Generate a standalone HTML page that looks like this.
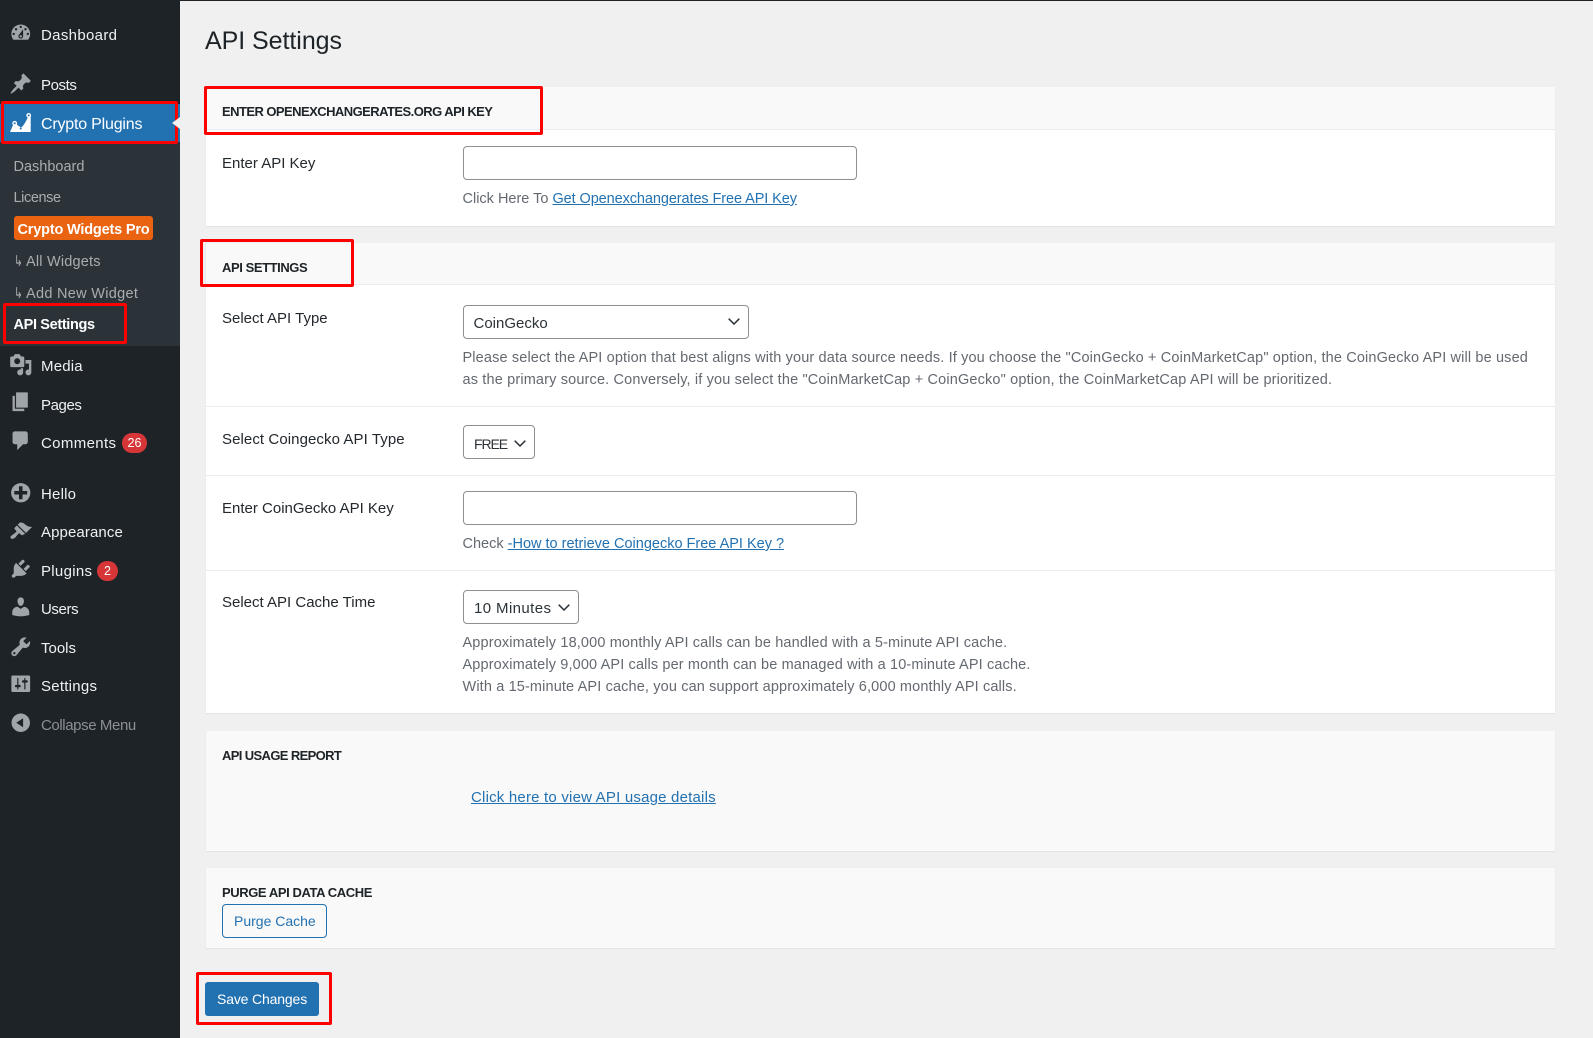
<!DOCTYPE html>
<html lang="en">
<head>
<meta charset="utf-8">
<title>API Settings</title>
<style>
html,body{margin:0;padding:0;width:1593px;height:1038px;overflow:hidden;background:#f0f0f0;font-family:"Liberation Sans",sans-serif}
*{box-sizing:border-box}
.t{position:absolute;white-space:nowrap;line-height:20px;height:20px}
.m{color:#f0f0f1;font-size:15px;left:41px}
.s{color:#a9adb1;font-size:14.5px;left:13.5px}
svg.i{position:absolute;width:23.5px;height:23.5px;left:8.75px;fill:#a0a5aa}
.bg{position:absolute}
.card{position:absolute;left:206px;width:1349px;background:#fff;box-shadow:0 1px 1px #e2e2e2,0 0 1px #e8e8e8}
.sep{position:absolute;left:206px;width:1349px;height:1px;background:#ececec}
.head{position:absolute;left:206px;width:1349px;background:#f9f9f9}
.h{color:#1d2327;font-size:13px;left:222px;font-weight:bold}
.l{color:#23282d;font-size:15px;left:222px}
.d{color:#646970;font-size:14.5px;left:462.5px}
a{color:#2271b1;text-decoration:underline}
.inp{position:absolute;left:463px;width:394px;height:34px;background:#fff;border:1px solid #8c8f94;border-radius:4px}
.sel{position:absolute;left:463px;height:34px;background:#fff;border:1px solid #8c8f94;border-radius:4px}
.chev{position:absolute;width:12px;height:7px;fill:none;stroke:#2c3338;stroke-width:1.5}
.red{position:absolute;border:3.5px solid #fd0000;border-radius:2px}
.badge{position:absolute;background:#d63638;color:#fff;border-radius:10px;height:20px;line-height:20px;font-size:12.5px;text-align:center}
.ar{position:absolute;left:14px;color:#a9adb1;font-size:15px;line-height:20px;height:20px;transform:scaleX(.7);transform-origin:left center}
</style>
</head>
<body>
<div class="bg" style="left:0;top:0;width:1593px;height:1px;background:#1d2327"></div>
<div class="bg" style="left:0;top:0;width:180px;height:1038px;background:#1d2327"></div>
<div class="bg" style="left:0;top:104px;width:180px;height:38px;background:#2271b1"></div>
<div class="bg" style="left:0;top:142px;width:180px;height:204px;background:#2c3338"></div>

<svg class="i" viewBox="0 0 20 20" style="top:20.5px"><path fill-rule="evenodd" d="M3.76 16h12.48c1.1-1.37 1.76-3.11 1.76-5 0-4.42-3.58-8-8-8s-8 3.58-8 8c0 1.89.66 3.63 1.76 5zM10 4c.55 0 1 .45 1 1s-.45 1-1 1-1-.45-1-1 .45-1 1-1zM6 6c.55 0 1 .45 1 1s-.45 1-1 1-1-.45-1-1 .45-1 1-1zm8 0c.55 0 1 .45 1 1s-.45 1-1 1-1-.45-1-1 .45-1 1-1zm-5.37 5.55L12 7v6c0 1.1-.9 2-2 2s-2-.9-2-2c0-.57.24-1.08.63-1.45zM4 10c.55 0 1 .45 1 1s-.45 1-1 1-1-.45-1-1 .45-1 1-1zm12 0c.55 0 1 .45 1 1s-.45 1-1 1-1-.45-1-1 .45-1 1-1zm-5 3c0-.55-.45-1-1-1s-1 .45-1 1 .45 1 1 1 1-.45 1-1z"/></svg>
<div class="t m" style="top:26px;letter-spacing:.33px">Dashboard</div>
<svg class="i" viewBox="0 0 20 20" style="top:71.5px"><path d="M10.44 3.02l1.82-1.82 6.36 6.35-1.83 1.82c-1.05-.68-2.48-.57-3.41.36l-.75.75c-.92.93-1.04 2.35-.35 3.41l-1.83 1.82-2.41-2.41-2.8 2.79c-.42.42-3.38 2.71-3.8 2.29s1.86-3.39 2.28-3.81l2.79-2.79L4.1 9.36l1.83-1.82c1.05.69 2.48.57 3.41-.36l.75-.75c.93-.92 1.05-2.35.35-3.41z"/></svg>
<div class="t m" style="top:76px;letter-spacing:-.4px">Posts</div>
<svg style="position:absolute;left:10px;top:113px;width:21px;height:20px" viewBox="0 0 21 20"><path fill="#fff" d="M0 19 3.5 11 5 10 8 12.5 11 14.5Q14 13 18.7 2.5L20.7 2V19Z"/><circle cx="4.7" cy="10.3" r="2.4" fill="#fff"/><circle cx="18.7" cy="2.4" r="2.4" fill="#fff"/><circle cx="4.7" cy="10.3" r="1" fill="#2271b1"/><circle cx="18.7" cy="2.4" r="1" fill="#2271b1"/><circle cx="10.7" cy="15.5" r="1" fill="#2271b1"/></svg>
<div class="t" style="top:115px;left:41px;color:#fff;font-size:16px;letter-spacing:-.2px">Crypto Plugins</div>

<div class="t s" style="top:157px">Dashboard</div>
<div class="t s" style="top:188px;letter-spacing:-.4px">License</div>
<div class="bg" style="left:14px;top:216px;width:139px;height:24px;background:#e96311;border-radius:3px"></div>
<div class="t" style="top:220px;left:17.5px;color:#fff;font-size:14.5px;font-weight:bold;letter-spacing:-.18px">Crypto Widgets Pro</div>
<div class="ar" style="top:252px">↳</div><div class="t s" style="top:252px;left:26px;letter-spacing:.2px">All Widgets</div>
<div class="ar" style="top:284px">↳</div><div class="t s" style="top:284px;left:26px;letter-spacing:.3px">Add New Widget</div>
<div class="t" style="top:315px;left:13.5px;color:#fff;font-size:14.5px;font-weight:bold;letter-spacing:-.35px">API Settings</div>

<svg class="i" viewBox="0 0 20 20" style="top:352.75px"><path d="M13 11V4c0-.55-.45-1-1-1h-1.67L9 1H5L3.67 3H2c-.55 0-1 .45-1 1v7c0 .55.45 1 1 1h10c.55 0 1-.45 1-1zM7 4.5c1.38 0 2.5 1.12 2.5 2.5S8.38 9.5 7 9.5 4.5 8.38 4.5 7 5.62 4.5 7 4.5zM14 6h5v10.5c0 1.38-1.12 2.5-2.5 2.5S14 17.88 14 16.5s1.12-2.5 2.5-2.5c.17 0 .34.02.5.05V9h-3V6zm-4 8.05V13h2v3.5c0 1.38-1.12 2.5-2.5 2.5S7 17.88 7 16.5 8.12 14 9.5 14c.17 0 .34.02.5.05z"/></svg>
<div class="t m" style="top:357px;letter-spacing:.2px">Media</div>
<svg class="i" viewBox="0 0 20 20" style="top:390.25px"><path d="M6 15V2h10v13H6zm-1 1h8v2H3V5h2v11z"/></svg>
<div class="t m" style="top:396px;letter-spacing:-.4px">Pages</div>
<svg class="i" viewBox="0 0 20 20" style="top:429.25px"><path d="M5 2h9c1.1 0 2 .9 2 2v7c0 1.1-.9 2-2 2h-2l-5 5v-5H5c-1.1 0-2-.9-2-2V4c0-1.1.9-2 2-2z"/></svg>
<div class="t m" style="top:434px;letter-spacing:.35px">Comments</div>
<div class="badge" style="left:122px;top:433px;width:25px">26</div>
<svg class="i" viewBox="0 0 20 20" style="top:481.25px"><path d="M15.8 4.2c3.2 3.21 3.2 8.39 0 11.6-3.21 3.2-8.39 3.2-11.6 0C1 12.59 1 7.41 4.2 4.2 7.41 1 12.59 1 15.8 4.2zm-4.3 11.3v-4h4v-3h-4v-4h-3v4h-4v3h4v4h3z"/></svg>
<div class="t m" style="top:485px;letter-spacing:.2px">Hello</div>
<svg class="i" viewBox="0 0 20 20" style="top:520.25px"><path d="M14.48 11.06L7.41 3.99l1.5-1.5c.5-.56 2.3-.47 3.51.32 1.21.8 1.43 1.28 2.91 2.1 1.18.64 2.45 1.26 4.45.85zm-.71.71L6.7 4.7 4.93 6.47c-.39.39-.39 1.02 0 1.41l1.06 1.06c.39.39.39 1.03 0 1.42-.6.6-1.43 1.11-2.21 1.69-.35.26-.7.53-1.01.84C1.43 13.23.91 14.66 1.5 15.5c.59.84 2.46.79 3.88-.63.31-.31.58-.66.84-1.01.58-.78 1.09-1.61 1.69-2.21.39-.39 1.03-.39 1.42 0l1.06 1.06c.39.39 1.02.39 1.41 0z"/></svg>
<div class="t m" style="top:523px;letter-spacing:.1px">Appearance</div>
<svg class="i" viewBox="0 0 20 20" style="top:557.25px"><path d="M13.11 4.36L9.87 7.6 8 5.73l3.24-3.24c.35-.34 1.05-.2 1.56.32.52.51.66 1.21.31 1.55zm-8 1.77l.91-1.12 9.01 9.01-1.19.84c-.71.71-2.63 1.16-3.82 1.16H6.14L4.9 17.26c-.59.59-1.54.59-2.12 0-.59-.58-.59-1.53 0-2.12l1.24-1.24v-3.88c0-1.13.4-3.19 1.09-3.89zm7.26 3.97l3.24-3.24c.34-.35 1.04-.21 1.55.31.52.51.66 1.21.31 1.55l-3.24 3.25z"/></svg>
<div class="t m" style="top:562px;letter-spacing:.3px">Plugins</div>
<div class="badge" style="left:97px;top:561px;width:21px">2</div>
<svg class="i" viewBox="0 0 20 20" style="top:595.25px"><path d="M10 9.25c-2.27 0-2.73-3.44-2.73-3.44C7 4.02 7.82 2 9.97 2c2.16 0 2.98 2.02 2.71 3.81 0 0-.41 3.44-2.68 3.44zm0 2.57L12.72 10c2.39 0 4.52 2.33 4.52 4.53v2.49s-3.65 1.13-7.24 1.13c-3.65 0-7.24-1.13-7.24-1.13v-2.49c0-2.25 1.94-4.48 4.47-4.48z"/></svg>
<div class="t m" style="top:600px;letter-spacing:-.4px">Users</div>
<svg class="i" viewBox="0 0 20 20" style="top:635.25px"><path d="M16.68 9.77c-1.34 1.34-3.3 1.67-4.95.99l-5.41 6.52c-.99.99-2.59.99-3.58 0s-.99-2.59 0-3.57l6.52-5.42c-.68-1.65-.35-3.61.99-4.95 1.28-1.28 3.12-1.62 4.72-1.06l-2.89 2.89 2.82 2.82 2.86-2.87c.53 1.58.18 3.39-1.08 4.65zM3.81 16.21c.4.39 1.04.39 1.43 0 .4-.4.4-1.04 0-1.43-.39-.4-1.03-.4-1.43 0-.39.39-.39 1.03 0 1.43z"/></svg>
<div class="t m" style="top:639px">Tools</div>
<svg class="i" viewBox="0 0 20 20" style="top:672.25px"><path d="M18 16V4c0-.55-.45-1-1-1H3c-.55 0-1 .45-1 1v12c0 .55.45 1 1 1h14c.55 0 1-.45 1-1zM8 11h1c.55 0 1 .45 1 1s-.45 1-1 1H8v1.5c0 .28-.22.5-.5.5s-.5-.22-.5-.5V13H6c-.55 0-1-.45-1-1s.45-1 1-1h1V5.5c0-.28.22-.5.5-.5s.5.22.5.5V11zm5-2h-1c-.55 0-1-.45-1-1s.45-1 1-1h1V5.5c0-.28.22-.5.5-.5s.5.22.5.5V7h1c.55 0 1 .45 1 1s-.45 1-1 1h-1v5.5c0 .28-.22.5-.5.5s-.5-.22-.5-.5V9z"/></svg>
<div class="t m" style="top:677px;letter-spacing:.25px">Settings</div>
<svg class="i" viewBox="0 0 20 20" style="top:711.25px"><path d="M10 2.16c4.33 0 7.84 3.51 7.84 7.84s-3.51 7.84-7.84 7.84S2.16 14.33 2.16 10 5.71 2.16 10 2.16zm2 11.72V6.12L6.18 9.97z"/></svg>
<div class="t m" style="top:716px;color:#8c9095;letter-spacing:-.4px">Collapse Menu</div>

<div class="t" style="top:31px;left:205px;color:#1d2327;font-size:25px;line-height:20px;letter-spacing:-.05px">API Settings</div>

<!-- card 1 -->
<div class="card" style="top:87px;height:139px"></div>
<div class="head" style="top:87px;height:42px"></div>
<div class="sep" style="top:129px"></div>
<div class="t h" style="top:102px;letter-spacing:-.55px">ENTER OPENEXCHANGERATES.ORG API KEY</div>
<div class="t l" style="top:154px">Enter API Key</div>
<div class="inp" style="top:146px"></div>
<div class="t d" style="top:189px">Click Here To <a style="letter-spacing:-.09px">Get Openexchangerates Free API Key</a></div>

<!-- card 2 -->
<div class="card" style="top:243px;height:470px"></div>
<div class="head" style="top:243px;height:41px"></div>
<div class="sep" style="top:284px"></div>
<div class="t h" style="top:258px;letter-spacing:-.42px">API SETTINGS</div>
<div class="t l" style="top:309px">Select API Type</div>
<div class="sel" style="top:305px;width:286px"></div>
<div class="t" style="top:314px;left:473.5px;color:#2c3338;font-size:15px">CoinGecko</div>
<svg class="chev" viewBox="0 0 12 7" style="left:728px;top:318px"><path d="M.7.7 6 6l5.3-5.3"/></svg>
<div class="t d" style="top:348px;letter-spacing:.14px">Please select the API option that best aligns with your data source needs. If you choose the "CoinGecko + CoinMarketCap" option, the CoinGecko API will be used</div>
<div class="t d" style="top:370px;letter-spacing:.155px">as the primary source. Conversely, if you select the "CoinMarketCap + CoinGecko" option, the CoinMarketCap API will be prioritized.</div>
<div class="sep" style="top:406px"></div>
<div class="t l" style="top:430px;letter-spacing:.08px">Select Coingecko API Type</div>
<div class="sel" style="top:425px;width:72px"></div>
<div class="t" style="top:434px;left:474px;color:#2c3338;font-size:14px;letter-spacing:-1.1px">FREE</div>
<svg class="chev" viewBox="0 0 12 7" style="left:514px;top:440px"><path d="M.7.7 6 6l5.3-5.3"/></svg>
<div class="sep" style="top:475px"></div>
<div class="t l" style="top:499px">Enter CoinGecko API Key</div>
<div class="inp" style="top:491px"></div>
<div class="t d" style="top:534px">Check <a>-How to retrieve Coingecko Free API Key ?</a></div>
<div class="sep" style="top:570px"></div>
<div class="t l" style="top:593px">Select API Cache Time</div>
<div class="sel" style="top:590px;width:116px"></div>
<div class="t" style="top:599px;left:474px;color:#2c3338;font-size:15px;letter-spacing:.4px">10 Minutes</div>
<svg class="chev" viewBox="0 0 12 7" style="left:558px;top:604px"><path d="M.7.7 6 6l5.3-5.3"/></svg>
<div class="t d" style="top:633px;letter-spacing:.14px">Approximately 18,000 monthly API calls can be handled with a 5-minute API cache.</div>
<div class="t d" style="top:655px;letter-spacing:.135px">Approximately 9,000 API calls per month can be managed with a 10-minute API cache.</div>
<div class="t d" style="top:677px;letter-spacing:.135px">With a 15-minute API cache, you can support approximately 6,000 monthly API calls.</div>

<!-- card 3 -->
<div class="card" style="top:731px;height:120px;background:#f9f9f9"></div>
<div class="t h" style="top:746px;letter-spacing:-.63px">API USAGE REPORT</div>
<div class="t" style="top:788px;left:471px;font-size:15px;letter-spacing:.2px"><a>Click here to view API usage details</a></div>

<!-- card 4 -->
<div class="card" style="top:868px;height:80px;background:#f9f9f9"></div>
<div class="t h" style="top:883px;letter-spacing:-.41px">PURGE API DATA CACHE</div>
<div class="bg" style="left:222px;top:904px;width:105px;height:34px;border:1px solid #2271b1;border-radius:4px;background:#f9f9f9"></div>
<div class="t" style="top:910.5px;left:234px;color:#2271b1;font-size:14px">Purge Cache</div>

<div class="bg" style="left:205px;top:982px;width:114px;height:34px;background:#2271b1;border-radius:3px"></div>
<div class="t" style="top:988.5px;left:217px;color:#fff;font-size:14px;letter-spacing:-.15px">Save Changes</div>

<!-- annotation boxes -->
<div class="red" style="left:1px;top:101px;width:177px;height:43px"></div>
<div class="red" style="left:3px;top:303px;width:124px;height:41px"></div>
<div class="red" style="left:204px;top:86px;width:339px;height:49px"></div>
<div class="red" style="left:200px;top:239px;width:154px;height:48px"></div>
<div class="red" style="left:196px;top:972px;width:136px;height:53px"></div>
<div class="bg" style="left:172px;top:117px;width:0;height:0;border:6px solid transparent;border-right:8px solid #f0f0f0;border-left:0"></div>
</body>
</html>
